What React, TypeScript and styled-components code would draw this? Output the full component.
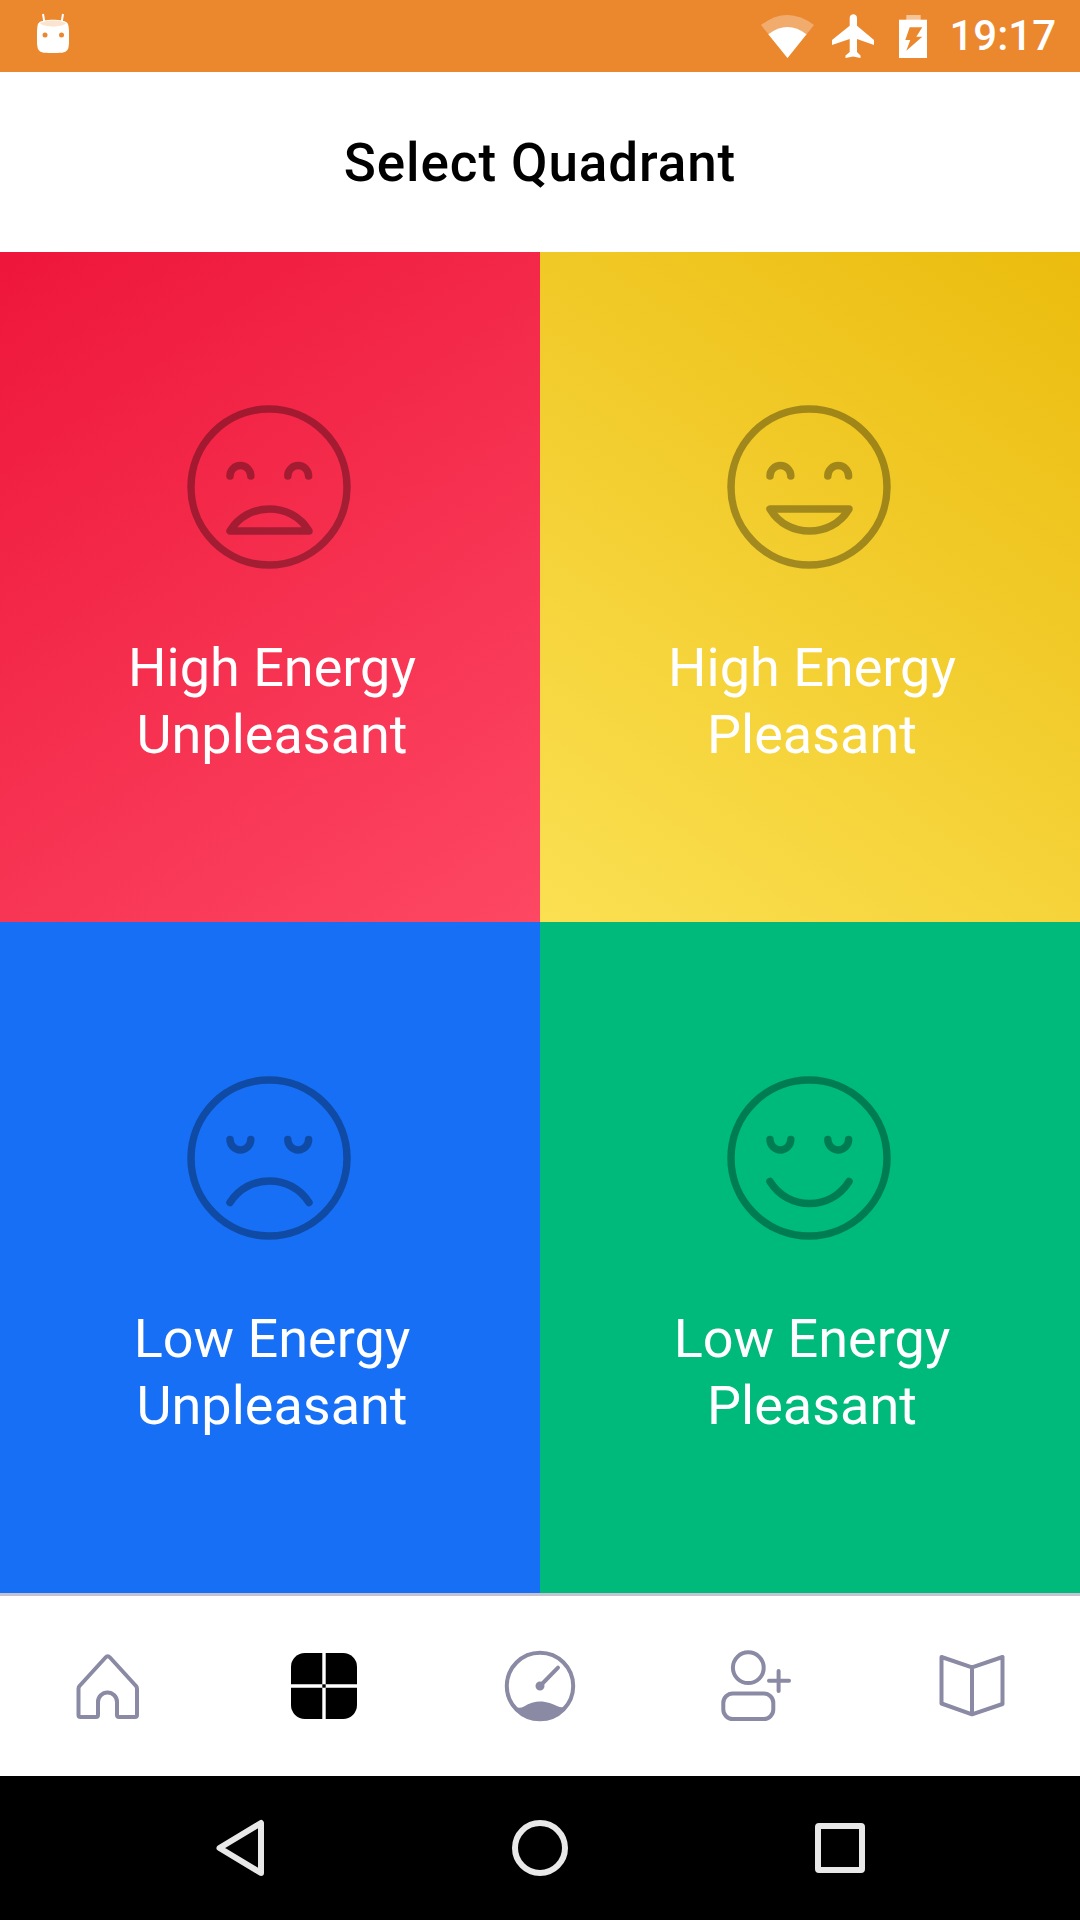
import React from "react";
import styled, { createGlobalStyle } from "styled-components";

type Mood = "tense" | "happy" | "sad" | "calm";

type Quadrant = {
  id: Mood;
  energy: string;
  feeling: string;
};

const quadrants: Quadrant[] = [
  { id: "tense", energy: "High Energy", feeling: "Unpleasant" },
  { id: "happy", energy: "High Energy", feeling: "Pleasant" },
  { id: "sad", energy: "Low Energy", feeling: "Unpleasant" },
  { id: "calm", energy: "Low Energy", feeling: "Pleasant" },
];

const backgrounds: Record<Mood, string> = {
  tense: "linear-gradient(145deg, #ee163a 0%, #fd4763 100%)",
  happy: "linear-gradient(215deg, #ebbc0e 0%, #fbe052 100%)",
  sad: "#176ff6",
  calm: "#00ba7c",
};

const GlobalStyle = createGlobalStyle`
  html, body {
    margin: 0;
    padding: 0;
    background: #fff;
  }
`;

const Screen = styled.main`
  width: 1080px;
  height: 1920px;
  display: flex;
  flex-direction: column;
  overflow: hidden;
  font-family: Roboto, "Noto Sans", sans-serif;
`;

const StatusBar = styled.header`
  height: 72px;
  flex: none;
  display: flex;
  align-items: center;
  justify-content: space-between;
  padding: 0 24px 0 37px;
  background: #eb882e;
`;

const AppBadge = styled.svg`
  margin-bottom: 6px;
`;

const StatusIcons = styled.div`
  display: flex;
  align-items: center;
  gap: 25px;
  color: #fff;
`;

const Wifi = styled.svg`
  margin-right: -7px;
`;

const Clock = styled.span`
  margin-left: -3px;
  font-family: Roboto, sans-serif;
  font-size: 42px;
  font-weight: 500;
  line-height: 72px;
  color: #fff;
`;

const TitleBar = styled.div`
  height: 180px;
  flex: none;
  display: flex;
  align-items: center;
  justify-content: center;
  padding-top: 2px;
  box-sizing: border-box;
  background: #fff;
`;

const Title = styled.h1`
  margin: 0;
  font-size: 53px;
  font-weight: 500;
  letter-spacing: 0.9px;
  color: #000;
`;

const Grid = styled.section`
  flex: none;
  display: grid;
  grid-template-columns: 540px 540px;
  grid-template-rows: 670px 671px;
`;

const Cell = styled.button<{ $mood: Mood; $low: boolean }>`
  display: flex;
  flex-direction: column;
  align-items: center;
  padding: ${(p) => (p.$low ? "154px" : "153px")} 0 0;
  border: 0;
  font-family: inherit;
  background: ${(p) => backgrounds[p.$mood]};
`;

const FaceIcon = styled.svg`
  margin-right: 3px;
  fill: none;
  stroke: rgba(0, 0, 0, 0.33);
  stroke-width: 7.5;
  stroke-linecap: round;
  stroke-linejoin: round;
`;

const Label = styled.div`
  margin-top: 65px;
  padding-left: 4px;
  font-size: 54px;
  line-height: 67px;
  font-weight: 400;
  text-align: center;
  color: #fff;
`;

const TabBar = styled.nav`
  height: 183px;
  flex: none;
  box-sizing: border-box;
  display: grid;
  grid-template-columns: repeat(5, 1fr);
  align-items: center;
  justify-items: center;
  border-top: 3px solid #c3c3d3;
  background: #fff;
`;

const TabIcon = styled.svg`
  fill: none;
  stroke: #8a8aa5;
  stroke-width: 4;
  stroke-linecap: round;
  stroke-linejoin: round;
`;

const SystemBar = styled.footer`
  height: 144px;
  flex: none;
  display: grid;
  grid-template-columns: repeat(3, 300px);
  justify-content: center;
  align-items: center;
  justify-items: center;
  background: #000;
`;

const SystemIcon = styled.svg`
  fill: none;
  stroke: #e8e8e8;
  stroke-width: 6;
  stroke-linejoin: round;
`;

function Face({ mood }: { mood: Mood }) {
  const closed = mood === "sad" || mood === "calm";
  return (
    <FaceIcon width="164" height="164" viewBox="0 0 164 164">
      <circle cx="82" cy="82" r="78" />
      {closed ? (
        <>
          <path d="M43 63.5a10.4 10.4 0 0 0 20.8 0" />
          <path d="M100.8 63.5a10.4 10.4 0 0 0 20.8 0" />
        </>
      ) : (
        <>
          <path d="M43 71a10.4 10.4 0 0 1 20.8 0" />
          <path d="M100.8 71a10.4 10.4 0 0 1 20.8 0" />
        </>
      )}
      {mood === "tense" && <path d="M43 126H122C113 111 98 104 82.5 104C67 104 52 111 43 126Z" />}
      {mood === "happy" && <path d="M43 104H122C113 119 98 126 82.5 126C67 126 52 119 43 104Z" />}
      {mood === "sad" && <path d="M43 126.500C52 112 67 105 82.500 105C98 105 113 112 122 126.500" />}
      {mood === "calm" && <path d="M43 105.500C52 120 67 127.500 82.500 127.500C98 127.500 113 120 122 105.500" />}
    </FaceIcon>
  );
}

export default function App() {
  return (
    <Screen>
      <GlobalStyle />
      <StatusBar>
        <AppBadge width="32" height="40" viewBox="0 0 32 40">
          <path d="M6 1l1.500 9M26 1l-1.500 9" stroke="#fff" strokeWidth="2" fill="none" />
          <path d="M7 7.500C12 6.500 20 6.500 25 7.500C29 8.500 31 9.500 31.500 13C32.500 20 32.500 29 31.500 34C31 38 28 39.500 24 39.800C19 40.200 13 40.200 8 39.800C4 39.500 1 38 0.500 34C-0.500 29 -0.500 20 0.500 13C1 9.500 3 8.500 7 7.500Z" fill="#fff" />
          <path d="M3 10.500C8 6.500 24 6.500 29 10.500C24 14.500 8 14.500 3 10.500Z" fill="#fbe3cd" />
          <circle cx="8" cy="22" r="2.500" fill="#eb882e" />
          <circle cx="24.500" cy="22" r="2.500" fill="#eb882e" />
        </AppBadge>
        <StatusIcons>
          <Wifi width="53" height="43" viewBox="0 0 53 43" fill="#fff">
            <path d="M0 10Q26.500 -10 53 10L26.500 43Z" opacity="0.3" />
            <path d="M7.300 19.300Q26.500 4.700 45.500 19.300L26.500 43Z" />
          </Wifi>
          <svg width="42" height="45" viewBox="0 0 42 45" fill="#fff">
            <path d="M17.700 4C17.700 -1 25 -1 25 4V11.700L42 26V31L25 25V38L28.500 41.500V44L21 42.500L13.500 44V41.500L17.700 38V25L0 31V26L17.700 11.700Z" />
          </svg>
          <svg width="28" height="43" viewBox="0 0 28 43" fill="#fff">
            <rect x="7.300" y="0" width="14.400" height="5" opacity="0.5" />
            <rect x="0" y="4.700" width="28" height="38.300" />
            <path d="M10.700 12.300H23.300L17.300 21.700H23.300L7.300 35.700L11.300 25H6.300Z" fill="#eb882e" />
          </svg>
          <Clock>19:17</Clock>
        </StatusIcons>
      </StatusBar>

      <TitleBar>
        <Title>Select Quadrant</Title>
      </TitleBar>

      <Grid>
        {quadrants.map((q, i) => (
          <Cell key={q.id} $mood={q.id} $low={i > 1}>
            <Face mood={q.id} />
            <Label>
              {q.energy}
              <br />
              {q.feeling}
            </Label>
          </Cell>
        ))}
      </Grid>

      <TabBar>
        <TabIcon width="80" height="80" viewBox="0 0 80 80">
          <path d="M37.500 11.500Q39.700 9 42 11.500L68 40Q69 41 69 43V69Q69 71 67 71H51Q49 71 49 69V56A9.500 9.500 0 0 0 30 56V69Q30 71 28 71H12.500Q10.500 71 10.500 69V43Q10.500 41 11.500 40Z" />
        </TabIcon>
        <svg width="80" height="80" viewBox="0 0 80 80">
          <rect x="7" y="7" width="66" height="66" rx="14" fill="#000" />
          <path d="M38.300 7h3.400v66h-3.400zM7 38.300h66v3.400H7z" fill="#fff" />
          <rect x="38.300" y="38.300" width="3.400" height="3.400" fill="#000" />
        </svg>
        <TabIcon width="80" height="80" viewBox="0 0 80 80">
          <circle cx="40" cy="40" r="33.200" />
          <path d="M40 40L58 21.700" />
          <circle cx="40" cy="40" r="2.500" fill="#8a8aa5" />
          <path d="M12 58C15 62 20 63 24 60.500C29 57 35 55.500 40 55.500C47 55.500 53 58 57 60C61 62 65 62 68 58A33 33 0 0 1 12 58Z" fill="#8a8aa5" stroke="none" />
        </TabIcon>
        <TabIcon width="80" height="80" viewBox="0 0 80 80">
          <circle cx="32.300" cy="21.700" r="15.400" />
          <rect x="7.300" y="47.500" width="50" height="25.500" rx="9.500" />
          <path d="M53 34.700H73M62.600 25V45" />
        </TabIcon>
        <TabIcon width="80" height="80" viewBox="0 0 80 80">
          <path d="M9.500 11L40 21.300L70.500 11V58L40 68.300L9.500 57.500ZM40 21.300V68.300" />
        </TabIcon>
      </TabBar>

      <SystemBar>
        <SystemIcon width="64" height="64" viewBox="0 0 64 64">
          <path d="M53 7V57L11.500 32Z" />
        </SystemIcon>
        <SystemIcon width="64" height="64" viewBox="0 0 64 64">
          <circle cx="32" cy="32" r="25" />
        </SystemIcon>
        <SystemIcon width="64" height="64" viewBox="0 0 64 64">
          <rect x="10" y="10" width="44" height="44" rx="1" />
        </SystemIcon>
      </SystemBar>
    </Screen>
  );
}
